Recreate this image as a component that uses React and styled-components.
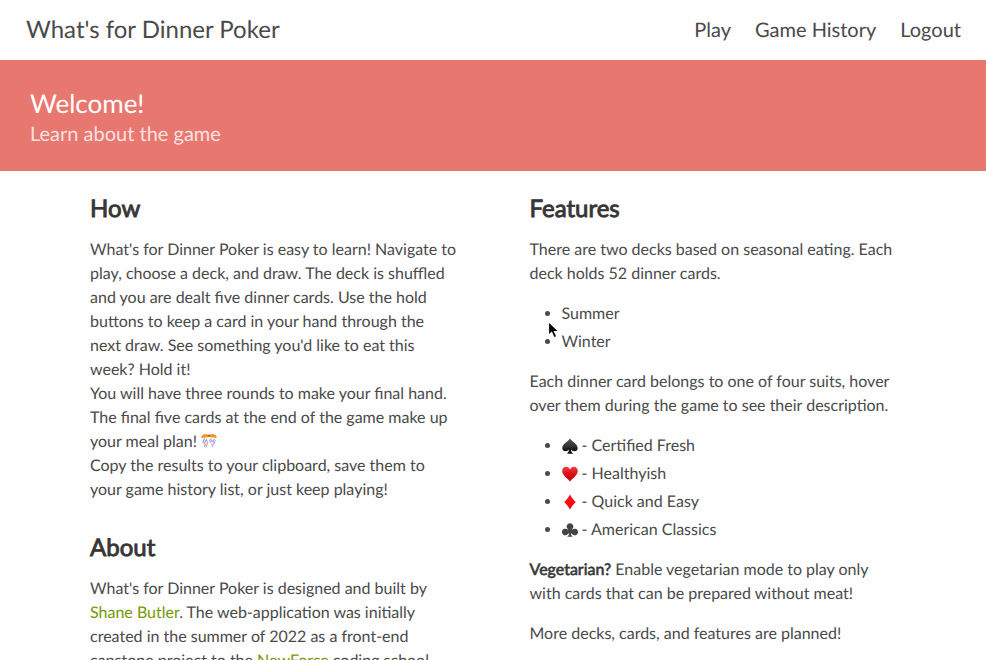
import React from 'react';
import styled, { createGlobalStyle } from 'styled-components';

const GlobalStyle = createGlobalStyle`
  *, *::before, *::after { box-sizing: border-box; margin: 0; padding: 0; }
  html { overflow: hidden; }
  body {
    background: #fefefe;
    color: #4a4a4a;
    font-family: Lato, "Liberation Sans", sans-serif;
    font-size: 16px;
    line-height: 1.5;
    text-rendering: geometricPrecision;
    -webkit-font-smoothing: antialiased;
  }
`;

const Page = styled.div`
  position: relative;
  height: 660px;
  overflow: hidden;
`;

const Navbar = styled.nav`
  display: flex;
  justify-content: space-between;
  align-items: center;
  height: 60px;
  padding: 0 25px 0 26px;
`;

const Brand = styled.a`
  font-size: 24px;
`;

const NavLinks = styled.div`
  display: flex;
  gap: 24px;
  font-size: 20px;
`;

const NavLink = styled.a``;

const Hero = styled.header`
  height: 111.3px;
  padding: 29px 30px 0;
  background: #e87770;
`;

const HeroTitle = styled.h1`
  color: #fff;
  font-size: 26px;
  font-weight: 400;
  line-height: 28px;
`;

const HeroSubtitle = styled.p`
  margin-top: 5px;
  color: rgba(255, 255, 255, 0.8);
  font-size: 20px;
  line-height: 25px;
`;

const Columns = styled.main`
  display: grid;
  grid-template-columns: 367px 367px;
  column-gap: 72.5px;
  padding: 24px 0 0 90px;
`;

const Column = styled.section`
  min-width: 0;
`;

const Heading = styled.h3`
  margin: ${(p) => (p.$spaced ? '32px' : '0')} 0 16px;
  color: #363636;
  font-size: 24px;
  font-weight: 400;
  line-height: 27px;
  -webkit-text-stroke: 0.9px currentColor;
`;

const Paragraph = styled.p`
  & + & { margin-top: 16px; }
`;

const Strong = styled.span`
  color: #363636;
  -webkit-text-stroke: 0.6px currentColor;
`;

const Link = styled.a`
  color: #739900;
`;

const List = styled.ul`
  margin: 16px 0 16px 32px;
  list-style: disc;
`;

const ListItem = styled.li`
  & + & { margin-top: 4px; }
`;

const Suit = styled.svg`
  width: 16px;
  height: 16px;
  margin-right: 4px;
  vertical-align: -3px;
`;

const Party = styled.svg`
  width: 16px;
  height: 16px;
  vertical-align: -2px;
`;

const Pointer = styled.svg`
  position: absolute;
  left: 546px;
  top: 320px;
  width: 15px;
  height: 21px;
`;

const suits = [
  {
    label: 'Certified Fresh',
    fill: 'url(#spadeFill)',
    d: 'M8 .3C7.2 3 .3 5.8 .3 10c0 2.200 1.500 3.300 3.200 3.300 1.500 0 2.700-.7 3.500-1.700-.1 1.800-.6 2.900-1.800 3.600v.6h5.600v-.6C9.600 14.500 9.100 13.400 9 11.600c.8 1 2 1.700 3.500 1.700 1.700 0 3.200-1.100 3.200-3.300C15.700 5.800 8.800 3 8 .3z',
  },
  {
    label: 'Healthyish',
    fill: 'url(#redFill)',
    d: 'M8 15.500C6.800 13 .2 9.800 .2 4.900 .2 2.400 2 .7 4.200 .7 6 .7 7.400 1.800 8 3.500 8.600 1.800 10 .7 11.800 .7c2.200 0 4 1.700 4 4.200C15.800 9.800 9.200 13 8 15.500z',
  },
  {
    label: 'Quick and Easy',
    fill: 'url(#diamondFill)',
    d: 'M8 .4C9.500 3.200 11.500 5.800 13.800 8 11.500 10.200 9.500 12.800 8 15.600 6.500 12.800 4.500 10.200 2.200 8 4.500 5.800 6.500 3.200 8 .4z',
  },
  {
    label: 'American Classics',
    fill: '#444',
    d: 'M8 1.200a3.300 3.300 0 0 1 2.400 5.600c-.4.500-.7.800-.7 1.100.4 0 .8-.5 1.600-.9a3.300 3.300 0 1 1 .2 6c-1.100-.5-1.900-1.400-2.600-1.700.1 1.500.5 2.500 1.600 3v.5h-5v-.5c1.100-.5 1.500-1.500 1.600-3-.7.300-1.500 1.200-2.600 1.700a3.300 3.300 0 1 1 .2-6c.8.400 1.200.9 1.600.9 0-.3-.3-.6-.7-1.100A3.300 3.300 0 0 1 8 1.200z',
  },
];

function GradientDefs() {
  return (
    <defs>
      <linearGradient id="spadeFill" x1="0" y1="0" x2="0" y2="1">
        <stop offset="0" stopColor="#555" />
        <stop offset="0.5" stopColor="#333" />
        <stop offset="0.8" stopColor="#111" />
      </linearGradient>
      <linearGradient id="redFill" x1="0" y1="0" x2="0" y2="1">
        <stop offset="0" stopColor="#f0403c" />
        <stop offset="0.45" stopColor="#df1016" />
        <stop offset="1" stopColor="#c40008" />
      </linearGradient>
      <linearGradient id="diamondFill" x1="0" y1="0" x2="0" y2="1">
        <stop offset="0" stopColor="#f01c1c" />
        <stop offset="1" stopColor="#f5000c" />
      </linearGradient>
    </defs>
  );
}

function PartyBall() {
  return (
    <Party viewBox="0 0 16 16" fill="none">
      <path d="M4 5 2.300 7.500M5 7 3 11.500M6.500 9 5.500 14" stroke="#ee8f9b" strokeWidth="1.100" />
      <path d="M3 6.500 1.800 10M5.500 6 6 9M4.500 11 3.500 14" stroke="#74aaf0" strokeWidth="1.100" />
      <path d="M9.500 5.500 11 9M12 6.500 14 10.500M10.500 11 12 14" stroke="#83b3f2" strokeWidth="1.100" />
      <path d="M8.500 6.500 9.500 10M11.500 7.500 12.800 12M13.300 6 14.500 8" stroke="#e99ab4" strokeWidth="1.100" />
      <path d="M.5 3.200C2 1 4.800.3 7.300 1.900L8 2.400l.7-.5C11.200.3 14 1 15.500 3.200c.5.900.1 1.700-.8 1.800-2.300-.5-4.400-.5-6.700-1.200-2.300.7-4.400.7-6.700 1.200C.4 4.900 0 4.100.5 3.200z" fill="#ee9a27" />
      <ellipse cx="8" cy="2.700" rx="1.500" ry="1.200" fill="#c96f12" />
    </Party>
  );
}

export default function App() {
  return (
    <>
      <GlobalStyle />
      <Page>
        <Navbar>
          <Brand>What's for Dinner Poker</Brand>
          <NavLinks>
            <NavLink>Play</NavLink>
            <NavLink>Game History</NavLink>
            <NavLink>Logout</NavLink>
          </NavLinks>
        </Navbar>
        <Hero>
          <HeroTitle>Welcome!</HeroTitle>
          <HeroSubtitle>Learn about the game</HeroSubtitle>
        </Hero>
        <Columns>
          <Column>
            <Heading>How</Heading>
            <Paragraph>
              What's for Dinner Poker is easy to learn! Navigate to play, choose a deck, and draw.
              The deck is shuffled and you are dealt five dinner cards. Use the hold buttons to keep
              a card in your hand through the next draw. See something you'd like to eat this week?
              Hold&nbsp;it!
              <br />
              You will have three rounds to make your final hand. The final five cards at the end of
              the game make up your meal plan! <PartyBall />
              <br />
              Copy the results to your clipboard, save them to your game history list, or just keep
              playing!
            </Paragraph>
            <Heading $spaced>About</Heading>
            <Paragraph>
              What's for Dinner Poker is designed and built by <Link>Shane Butler</Link>. The
              web-application was initially created in the summer of 2022 as a front-end capstone
              project to the <Link>NewForce</Link> coding school.
            </Paragraph>
          </Column>
          <Column>
            <Heading>Features</Heading>
            <Paragraph>
              There are two decks based on seasonal eating. Each deck holds 52 dinner cards.
            </Paragraph>
            <List>
              <ListItem>Summer</ListItem>
              <ListItem>Winter</ListItem>
            </List>
            <Paragraph>
              Each dinner card belongs to one of four suits, hover over them during the game to see
              their description.
            </Paragraph>
            <List>
              {suits.map((suit) => (
                <ListItem key={suit.label}>
                  <Suit viewBox="0 0 16 16">
                    <GradientDefs />
                    <path d={suit.d} fill={suit.fill} />
                  </Suit>
                  - {suit.label}
                </ListItem>
              ))}
            </List>
            <Paragraph>
              <Strong>Vegetarian?</Strong> Enable vegetarian mode to play only with cards that can be
              prepared without meat!
            </Paragraph>
            <Paragraph>More decks, cards, and features are planned!</Paragraph>
          </Column>
        </Columns>
        <Pointer viewBox="0 0 15 21">
          <path
            d="M2.500 1.500v14l3.200-3 2.300 5.200 2.800-1.200-2.300-5h4.500z"
            fill="#000"
            stroke="#fff"
            strokeWidth="1.200"
          />
        </Pointer>
      </Page>
    </>
  );
}
